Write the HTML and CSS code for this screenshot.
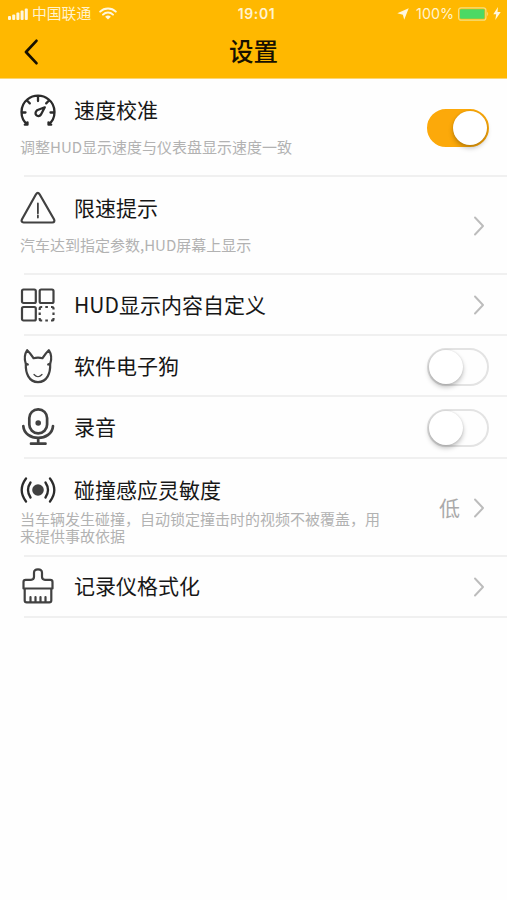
FILE: index.html
```html
<!DOCTYPE html>
<html lang="zh-CN">
<head>
<meta charset="utf-8">
<title>设置</title>
<link rel="stylesheet" href="styles.css">
</head>
<body>
<header class="header">
  <div class="status">
    <div class="status-left">
      <svg class="signal" width="21" height="12" viewBox="0 0 21 12"><rect x="0" y="8" width="3" height="4" rx="1"/><rect x="4.2" y="6.5" width="3" height="5.5" rx="1"/><rect x="8.4" y="4.5" width="3" height="7.5" rx="1"/><rect x="12.6" y="2.5" width="3" height="9.5" rx="1"/><rect x="16.8" y="0.5" width="3" height="11.5" rx="1"/></svg>
      <span class="carrier">中国联通</span>
      <svg class="wifi" width="18" height="13" viewBox="0 0 18 13"><path d="M1.2 4.6C5.5.4 12.5.4 16.8 4.6M4 7.6C6.8 4.9 11.2 4.9 14 7.6"/><path class="wifi-dot" d="M9 12.6 6.1 9.7Q9 7.3 11.900 9.700Z"/></svg>
    </div>
    <span class="time">19:01</span>
    <div class="status-right">
      <svg class="location" width="12" height="12" viewBox="0 0 12 12"><path d="M11.700.3 7.200 11.700 5.900 6.700.3 5.300Z"/></svg>
      <span class="percent">100%</span>
      <svg class="battery" width="32" height="14" viewBox="0 0 32 14"><rect class="shell" x=".6" y=".8" width="27.300" height="12.400" rx="2.500"/><rect class="charge" x="2" y="2.200" width="24.500" height="9.600" rx="1"/><path class="tip" d="M29.200 4.800q2 2.200 0 4.400Z"/></svg>
      <svg class="bolt" width="8" height="13" viewBox="0 0 8 13"><path d="M5 0 .3 7.200H3.200L2.300 13 7.700 5H4.500Z"/></svg>
    </div>
  </div>
  <div class="navbar">
    <svg class="back" width="14" height="26" viewBox="0 0 14 26"><path d="M12.400 1.800 2 13 12.400 24.200"/></svg>
    <h1>设置</h1>
  </div>
</header>
<main class="list">
  <section class="row tall">
    <div class="info">
      <div class="heading">
        <svg class="icon" viewBox="0 0 36 36"><path d="M7.500 31.500C-.5 25.500-.5 12.500 7.500 6.300c6-4.800 15-4.800 21 0 8 6.200 8 19.200 0 25.200M4.800 31.700h2.700v-2.400M31.200 31.700h-2.700v-2.400M18 3v5M7.500 8l2.300 2.400M28.500 8l-2.300 2.400M2 19.500h3.500M34 19.500h-3.500"/><path d="M24.800 14.300 17 17.300c-4 3.500 1 8.200 4 4.200Z"/></svg>
        <h2>速度校准</h2>
      </div>
      <p>调整HUD显示速度与仪表盘显示速度一致</p>
    </div>
    <span class="switch on"><i></i></span>
  </section>
  <section class="row tall">
    <div class="info">
      <div class="heading">
        <svg class="icon thin" viewBox="0 0 36 36"><path class="outline" d="M16 3.300q1.800-2.700 3.600 0L34 28.300q1.300 3-1.800 3.200H3.700Q.6 31.300 2 28.300Z"/><path d="M17.900 12.500v9.800M17.900 24.500v2"/></svg>
        <h2>限速提示</h2>
      </div>
      <p>汽车达到指定参数,HUD屏幕上显示</p>
    </div>
    <svg class="chevron" viewBox="0 0 10 20"><path d="M1 1.500 9 10 1 18.500"/></svg>
  </section>
  <section class="row">
    <div class="heading">
      <svg class="icon square" viewBox="0 0 36 36"><rect x="2" y="2.500" width="13.800" height="13.500" rx="1.500"/><rect x="19.700" y="2.500" width="13.800" height="13.500" rx="1.500"/><rect x="2" y="20" width="13.800" height="13.500" rx="1.500"/><path d="M19.700 23v-1.500q0-1.500 1.500-1.500h1M25.300 20h2.600M31 20h1q1.500 0 1.500 1.500v1M33.500 25.500v2.500M33.500 31v1q0 1.500-1.500 1.500h-1M27.900 33.500h-2.600M22.200 33.500h-1q-1.500 0-1.500-1.500v-1M19.700 28v-2.500"/></svg>
      <h2>HUD显示内容自定义</h2>
    </div>
    <svg class="chevron" viewBox="0 0 10 20"><path d="M1 1.500 9 10 1 18.500"/></svg>
  </section>
  <section class="row raised">
    <div class="heading">
      <svg class="icon thin" viewBox="0 0 36 36"><path class="outline" d="M5.800 16C3.800 10 5 5.500 7.200 2.200q3.200 3 6.300 8 4.500-1.300 9 0 3.100-5 6.300-8C31 5.500 32.200 10 30.200 16c.3 9-2.900 18-12.200 18.200C8.700 34 5.500 25 5.800 16ZM5.800 15.500l2 1M30.200 15.500l-2 1"/><path class="fine" d="M14 26.500q4 4.500 8 0"/></svg>
      <h2>软件电子狗</h2>
    </div>
    <span class="switch"><i></i></span>
  </section>
  <section class="row raised">
    <div class="heading">
      <svg class="icon mic" viewBox="0 0 36 36"><rect x="9.300" y="0.300" width="17.800" height="24" rx="8.800"/><path d="M3.300 17C4.300 32.800 32 32.800 33 17M18.200 29V34.500M11 34.700h14.500"/><circle class="solid" cx="18.200" cy="14" r="2.800"/></svg>
      <h2>录音</h2>
    </div>
    <span class="switch"><i></i></span>
  </section>
  <section class="row tall sensitivity">
    <div class="info">
      <div class="heading">
        <svg class="icon" viewBox="0 0 36 36"><circle class="solid" cx="18" cy="18" r="5.800"/><path d="M6 6.500q-8.600 11.500 0 23M30 6.500q8.600 11.500 0 23M10.500 10.500q-5 7.500 0 15M25.500 10.500q5 7.500 0 15"/></svg>
        <h2>碰撞感应灵敏度</h2>
      </div>
      <p>当车辆发生碰撞，自动锁定撞击时的视频不被覆盖，用来提供事故依据</p>
    </div>
    <span class="value">低</span>
    <svg class="chevron" viewBox="0 0 10 20"><path d="M1 1.500 9 10 1 18.500"/></svg>
  </section>
  <section class="row raised">
    <div class="heading">
      <svg class="icon thin" viewBox="0 0 36 36"><path class="outline" d="M3.500 20.500V14q0-2.200 2.200-2.200h5.300q3 0 3-3V4.800q0-3.500 4-3.500t4 3.500v4q0 3 3 3h5.300q2.200 0 2.200 2.200v6.500ZM4.700 20.500v12q0 1.800 2 1.800h22.600q2 0 2-1.800v-12M10.500 33.500V29M15.500 33.500v-4.500M20.500 33.500v-4.500M25.500 33.500V29"/></svg>
      <h2>记录仪格式化</h2>
    </div>
    <svg class="chevron" viewBox="0 0 10 20"><path d="M1 1.500 9 10 1 18.500"/></svg>
  </section>
</main>
</body>
</html>
```
FILE: styles.css
```css
* { box-sizing: border-box; }
body {
  margin: 0;
  min-height: 900px;
  background: #fefefe;
  color: #171717;
  font-family: "Noto Sans CJK SC", sans-serif;
}
h1, h2, p { margin: 0; font-weight: 400; }
svg { display: block; flex: none; fill: none; stroke-linecap: round; stroke-linejoin: round; }
.header { height: 79px; background: #ffb800; border-bottom: 1px solid #fbd675; }
.status {
  display: grid;
  grid-template-columns: 1fr auto 1fr;
  align-items: center;
  height: 27px;
  padding: 0 6px 0 8px;
  color: #fff3cf;
  line-height: 20px;
}
.status-left, .status-right { display: flex; align-items: center; }
.status-right { justify-content: flex-end; }
.signal, .location, .bolt, .wifi-dot { fill: #fff7df; }
.carrier { margin: -1px 8px 0 3px; font-size: 14.800px; }
.wifi { stroke: #fff7df; stroke-width: 2; }
.wifi .wifi-dot { stroke: none; }
.time { padding-left: 4px; font: 600 14px/20px Inter, sans-serif; letter-spacing: .6px; }
.percent { margin: 0 4px 0 7px; font: 14.300px/20px Inter, sans-serif; }
.shell { stroke: #f5df80; stroke-width: 1.200; }
.charge { fill: #4cd964; }
.tip { fill: #f5df80; }
.bolt { margin-left: 3px; }
.navbar {
  display: grid;
  grid-template-columns: 40px 1fr 40px;
  align-items: center;
  height: 50px;
  padding: 0 24px;
}
.back { stroke: #161000; stroke-width: 2.700; }
.navbar h1 { margin-top: -2px; font-size: 24.500px; line-height: 36px; font-weight: 500; color: #161000; text-align: center; }
.row {
  display: flex;
  align-items: center;
  justify-content: space-between;
  height: 61.300px;
  margin-left: 24px;
  padding: 2px 18px 0 0;
  border-bottom: 2px solid #f0f0f0;
}
.row.tall { height: 97.900px; }
.heading { display: flex; align-items: center; gap: 18px; margin-left: -4px; height: 36px; }
.raised .heading { margin-top: -2px; }
.info { align-self: flex-start; padding-top: 12px; }
h2 { margin-top: -2px; font-size: 21px; line-height: 30px; }
.tall h2 { margin-top: -4px; }
.sensitivity h2 { margin-top: -2px; }
p { margin: 7px 0 0 -4px; font-size: 15px; line-height: 22px; color: #b2b2b2; width: 365px; }
.icon { width: 36px; height: 36px; stroke: #2b2b2b; stroke-width: 2.300; }
.thin, .square, .mic { stroke: #414141; }
.thin { stroke-width: 1.800; }
.thin .outline { stroke-width: 2.200; }
.thin .fine { stroke-width: 1.200; }
.square { stroke-width: 2.200; stroke-linecap: butt; }
.mic { stroke-width: 2.700; overflow: visible; }
.solid { fill: #414141; stroke: none; }
.chevron { width: 10px; height: 20px; margin-right: 5px; stroke: #bcbcbc; stroke-width: 1.900; }
.switch {
  flex: none;
  width: 62px;
  height: 38px;
  border: 2px solid #e3e3e3;
  border-radius: 19px;
  background: #fefefe;
}
.switch i {
  display: block;
  width: 34px;
  height: 34px;
  border-radius: 50%;
  background: #fff;
  box-shadow: 0 3px 5px rgba(0, 0, 0, .25), 0 0 2px rgba(0, 0, 0, .12);
}
.switch.on { border-color: #fca90a; background: #fca90a; }
.switch.on i { margin-left: auto; }
.sensitivity .info { padding-top: 11px; }
.sensitivity p { margin-top: 2px; line-height: 17px; }
.value { margin: -2px 14px 0 auto; font-size: 21px; line-height: 30px; color: #aaa; }
```
